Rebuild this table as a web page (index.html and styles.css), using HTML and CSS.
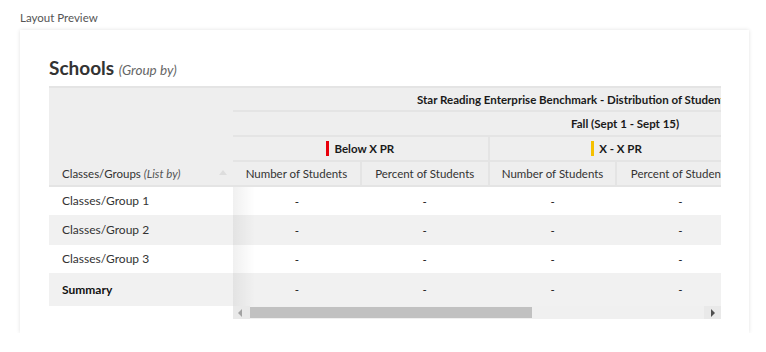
FILE: index.html
```html
<!DOCTYPE html>
<html lang="en">
<head>
    <meta charset="UTF-8">
    <meta name="viewport" content="width=device-width, initial-scale=1.0">
    <title>Layout Preview</title>
    <link rel="stylesheet" href="styles.css">
</head>
<body>
    <div class="label">Layout Preview</div>

    <div class="card">
        <h2 class="title">Schools <span class="hint">(Group by)</span></h2>

        <div class="report">
            <!-- frozen list column -->
            <div class="fixed">
                <div class="fixed-head">
                    <span>Classes/Groups <span class="hint">(List by)</span></span>
                    <span class="sort"></span>
                </div>
                <div class="row">Classes/Group 1</div>
                <div class="row alt h30">Classes/Group 2</div>
                <div class="row">Classes/Group 3</div>
                <div class="row alt summary">Summary</div>
            </div>

            <!-- scrolling data columns -->
            <div class="scroll">
                <div class="viewport">
                    <table class="data">
                        <thead>
                            <tr class="r1"><th colspan="6">Star Reading Enterprise Benchmark - Distribution of Students by Category</th></tr>
                            <tr class="r2"><th colspan="6">Fall (Sept 1 - Sept 15)</th></tr>
                            <tr class="r3">
                                <th colspan="2"><span class="mark red"></span>Below X PR</th>
                                <th colspan="2"><span class="mark yellow"></span>X - X PR</th>
                                <th colspan="2"><span class="mark green"></span>Above X PR</th>
                            </tr>
                            <tr class="r4">
                                <td>Number of Students</td>
                                <td>Percent of Students</td>
                                <td>Number of Students</td>
                                <td>Percent of Students</td>
                                <td>Number of Students</td>
                                <td>Percent of Students</td>
                            </tr>
                        </thead>
                        <tbody>
                            <tr class="b1"><td>-</td><td>-</td><td>-</td><td>-</td><td>-</td><td>-</td></tr>
                            <tr class="b2 alt"><td>-</td><td>-</td><td>-</td><td>-</td><td>-</td><td>-</td></tr>
                            <tr class="b1"><td>-</td><td>-</td><td>-</td><td>-</td><td>-</td><td>-</td></tr>
                            <tr class="b3 alt"><td>-</td><td>-</td><td>-</td><td>-</td><td>-</td><td>-</td></tr>
                        </tbody>
                    </table>
                    <div class="edge"></div>
                </div>
                <div class="scrollbar">
                    <span class="arrow left"></span>
                    <div class="track"><div class="thumb"></div></div>
                    <span class="arrow right"></span>
                </div>
            </div>
        </div>
    </div>
</body>
</html>
```

FILE: styles.css
```css
body { margin: 0; font-family: Lato, "Liberation Sans", sans-serif; color: #333; background: #fff; }

.label { font-size: 11.5px; color: #555; padding: 11px 0 0 20px; height: 30px; box-sizing: border-box; }

.card { margin-left: 20px; width: 729px; height: 303px; box-sizing: border-box; padding: 24px 28px 0 29px;
        background: #fff; box-shadow: 0 0 4px rgba(0,0,0,0.12); }

.title { margin: 0; height: 32px; font-size: 19px; font-weight: 700; color: #333; line-height: 27px; }
.title .hint { font-size: 13.5px; }
.hint { font-style: italic; font-weight: 400; color: #666; font-size: 12.5px; }

.report { display: flex; }

/* left frozen column */
.fixed { width: 184px; flex: none; position: relative; z-index: 1; }
.fixed-head { height: 101px; box-sizing: border-box; background: #eee; border-top: 2px solid #e4e4e4;
              border-bottom: 2px solid #e4e4e4; display: flex; align-items: flex-end; justify-content: space-between;
              padding: 0 6px 5px 13px; font-size: 11.5px; color: #333; }
.fixed-head .hint { font-size: 11.5px; color: #555; }
.sort { width: 0; height: 0; border-left: 4px solid transparent; border-right: 4px solid transparent;
        border-bottom: 5px solid #ddd; margin-bottom: 5px; }

.row { height: 28px; line-height: 28px; padding-left: 13px; font-size: 12px; background: #fff; color: #333; }
.row.alt { background: #f1f1f1; }
.row.h30 { height: 30px; line-height: 30px; }
.row.summary { height: 33px; line-height: 34px; font-weight: 700; color: #111; }

/* scrolling part */
.scroll { width: 488px; flex: none; }
.viewport { overflow: hidden; position: relative; }
.edge { position: absolute; left: 0; top: 101px; bottom: 0; width: 22px;
        background: linear-gradient(to right, rgba(0,0,0,0.06), rgba(0,0,0,0)); }

.data { border-collapse: collapse; table-layout: fixed; width: 768px; font-size: 11.5px; }
.data th, .data td { padding: 0; text-align: center; white-space: nowrap; }
.data thead th, .data thead td { background: #eee; border: 2px solid #e4e4e4; border-left: 0; }
.data thead th { font-weight: 700; color: #1a1a1a; }
.data thead tr:first-child th { border-top: 2px solid #e4e4e4; }
.data th:first-child, .data thead td:first-child { border-left: 0; }
.data .r1 th { height: 22px; text-align: left; padding-left: 184px; }
.data .r2 th { height: 23px; text-align: left; padding-left: 338px; }
.data .r3 th { height: 23px; }
.data .r4 td { height: 23px; color: #333; }
.data th:last-child { border-right: 0; }

.mark { display: inline-block; width: 3px; height: 15px; vertical-align: -3px; margin-right: 5px; }
.mark.red { background: #e8000b; }
.mark.yellow { background: #f5c000; }
.mark.green { background: #2e9b3a; }

.data tbody td { color: #222; }
.data .b1 td { height: 28px; background: #fff; }
.data .b2 td { height: 30px; background: #f1f1f1; }
.data .b3 td { height: 33px; background: #f1f1f1; }

.scrollbar { display: flex; height: 13px; background: #f0f0f0; align-items: stretch; }
.track { flex: 1; padding: 1px 0 1px; display: flex; }
.thumb { width: 282px; background: #c1c1c1; }
.arrow { width: 17px; flex: none; position: relative; }
.arrow.left { background: #e9e9e9; }
.arrow.right { background: #e9e9e9; }
.arrow::after { content: ""; position: absolute; top: 3px; width: 0; height: 0;
                border-top: 4px solid transparent; border-bottom: 4px solid transparent; }
.arrow.left::after { left: 5px; border-right: 4px solid #a3a3a3; }
.arrow.right::after { left: 7px; border-left: 4px solid #505050; }
```
